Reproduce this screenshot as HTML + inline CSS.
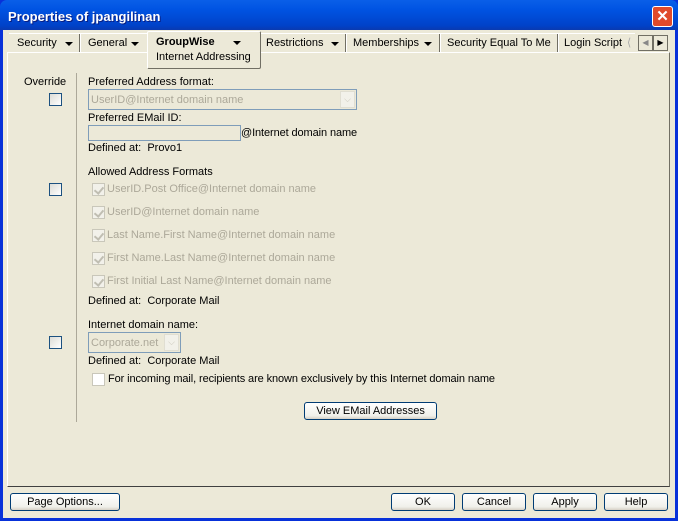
<!DOCTYPE html>
<html><head><style>
*{margin:0;padding:0;box-sizing:border-box}
body{width:678px;height:521px;overflow:hidden;font-family:"Liberation Sans",sans-serif;font-size:11px;color:#000;background:#0831d9;position:relative}
.a{position:absolute;white-space:nowrap}
.win{position:absolute;left:3px;top:30px;width:672px;height:488px;background:#ece9d8}
.title{position:absolute;left:0;top:0;width:678px;height:30px;background:linear-gradient(#0a5fe8,#0054e3 30%,#0042c9 85%,#0a3ab0);border-radius:7px 7px 0 0}
.cb{position:absolute;width:13px;height:13px;border:1px solid #1c5180;background:linear-gradient(135deg,#dcdcd6,#fff)}
.cbd{position:absolute;width:13px;height:13px;border:1px solid #c9c7ba;background:#f2f1ea}
.cbd:after{content:"";position:absolute;left:3px;top:1px;width:4px;height:7px;border:solid #c0beb2;border-width:0 2px 2px 0;transform:rotate(40deg)}
.g{color:#aca899}
.btn{position:absolute;height:18px;border:1px solid #003c74;border-radius:3px;background:linear-gradient(#fff,#f0f0ea 80%,#d6d0c5);text-align:center;line-height:16px}
.sep{position:absolute;top:34px;width:2px;height:18px;border-left:1px solid #716f64;border-right:1px solid #fff}
.dd{position:absolute;width:0;height:0;border-left:4px solid transparent;border-right:4px solid transparent;border-top:4px solid #000}
</style></head><body>
<div class="title"></div>
<div class="a" style="left:8px;top:9px;color:#fff;font-weight:bold;font-size:13px;text-shadow:1px 1px #0a1e80">Properties of jpangilinan</div>
<div class="a" style="left:652px;top:6px;width:21px;height:21px;border:1px solid #fff;border-radius:3px;background:#e04a2a;color:#fff;font-weight:bold;font-size:15px;text-align:center;line-height:19px">✕</div>
<div class="win"></div>
<!-- tabs -->
<div class="a" style="left:9px;top:33px;width:626px;height:20px;background:#ece9d8;border-top:1px solid #fff"></div>
<div class="a" style="left:7px;top:52px;width:663px;height:435px;border:1px solid #fff;border-right-color:#716f64;border-bottom-color:#404040"></div>
<div class="a" style="left:17px;top:37px">Security</div><div class="dd" style="left:65px;top:42px"></div>
<div class="sep" style="left:79px"></div>
<div class="a" style="left:88px;top:37px">General</div><div class="dd" style="left:131px;top:42px"></div>
<div class="a" style="left:147px;top:31px;width:114px;height:38px;border:1px solid #fff;border-right-color:#716f64;border-bottom-color:#716f64;border-radius:2px;background:#ece9d8"></div>
<div class="a" style="left:156px;top:36px;font-weight:bold">GroupWise</div>
<div class="dd" style="left:233px;top:41px"></div>
<div class="a" style="left:156px;top:51px">Internet Addressing</div>
<div class="a" style="left:266px;top:37px">Restrictions</div><div class="dd" style="left:331px;top:42px"></div>
<div class="sep" style="left:345px"></div>
<div class="a" style="left:353px;top:37px">Memberships</div><div class="dd" style="left:424px;top:42px"></div>
<div class="sep" style="left:439px"></div>
<div class="a" style="left:447px;top:37px">Security Equal To Me</div>
<div class="sep" style="left:557px"></div>
<div class="a" style="left:564px;top:37px">Login Script</div>
<div class="a" style="left:627px;top:36px;color:#aaa">⟨</div>
<div class="a" style="left:638px;top:35px;width:15px;height:16px;border:1px solid #716f64;background:#ece9d8;font-size:8px;text-align:center;line-height:14px;color:#888">◀</div>
<div class="a" style="left:653px;top:35px;width:15px;height:16px;border:1px solid #716f64;background:#ece9d8;font-size:8px;text-align:center;line-height:14px">▶</div>
<!-- panel -->
<div class="a" style="left:76px;top:73px;width:1px;height:349px;background:#aca899"></div>
<div class="a" style="left:24px;top:76px">Override</div>
<div class="cb" style="left:49px;top:93px"></div>
<div class="cb" style="left:49px;top:183px"></div>
<div class="cb" style="left:49px;top:336px"></div>
<div class="a" style="left:88px;top:76px">Preferred Address format:</div>
<div class="a" style="left:88px;top:89px;width:269px;height:21px;border:1px solid #7f9db9;background:#ece9d8"></div>
<div class="a g" style="left:91px;top:94px">UserID@Internet domain name</div>
<div class="a" style="left:340px;top:91px;width:15px;height:17px;background:#f2f1ea;border:1px solid #e0ded2;color:#c9c7ba;font-size:9px;text-align:center;line-height:15px">⌵</div>
<div class="a" style="left:88px;top:112px">Preferred EMail ID:</div>
<div class="a" style="left:88px;top:125px;width:153px;height:16px;border:1px solid #7f9db9;background:#ece9d8"></div>
<div class="a" style="left:241px;top:127px;letter-spacing:-0.1px">@Internet domain name</div>
<div class="a" style="left:88px;top:142px">Defined at:&nbsp; Provo1</div>
<div class="a" style="left:88px;top:166px">Allowed Address Formats</div>
<div class="cbd" style="left:92px;top:183px"></div><div class="a g" style="left:107px;top:183px">UserID.Post Office@Internet domain name</div>
<div class="cbd" style="left:92px;top:206px"></div><div class="a g" style="left:107px;top:206px">UserID@Internet domain name</div>
<div class="cbd" style="left:92px;top:229px"></div><div class="a g" style="left:107px;top:229px">Last Name.First Name@Internet domain name</div>
<div class="cbd" style="left:92px;top:252px"></div><div class="a g" style="left:107px;top:252px">First Name.Last Name@Internet domain name</div>
<div class="cbd" style="left:92px;top:275px"></div><div class="a g" style="left:107px;top:275px">First Initial Last Name@Internet domain name</div>
<div class="a" style="left:88px;top:295px">Defined at:&nbsp; Corporate Mail</div>
<div class="a" style="left:88px;top:319px">Internet domain name:</div>
<div class="a" style="left:88px;top:332px;width:93px;height:21px;border:1px solid #7f9db9;background:#ece9d8"></div>
<div class="a g" style="left:91px;top:337px">Corporate.net</div>
<div class="a" style="left:164px;top:334px;width:15px;height:17px;background:#f2f1ea;border:1px solid #e0ded2;color:#c9c7ba;font-size:9px;text-align:center;line-height:15px">⌵</div>
<div class="a" style="left:88px;top:355px">Defined at:&nbsp; Corporate Mail</div>
<div class="cb" style="left:92px;top:373px;border-color:#c9c7ba;background:#fff"></div>
<div class="a" style="left:108px;top:373px;letter-spacing:-0.1px">For incoming mail, recipients are known exclusively by this Internet domain name</div>
<div class="btn" style="left:304px;top:402px;width:133px">View EMail Addresses</div>
<div class="btn" style="left:10px;top:493px;width:110px">Page Options...</div>
<div class="btn" style="left:391px;top:493px;width:64px">OK</div>
<div class="btn" style="left:462px;top:493px;width:64px">Cancel</div>
<div class="btn" style="left:533px;top:493px;width:64px">Apply</div>
<div class="btn" style="left:604px;top:493px;width:64px">Help</div>
</body></html>
